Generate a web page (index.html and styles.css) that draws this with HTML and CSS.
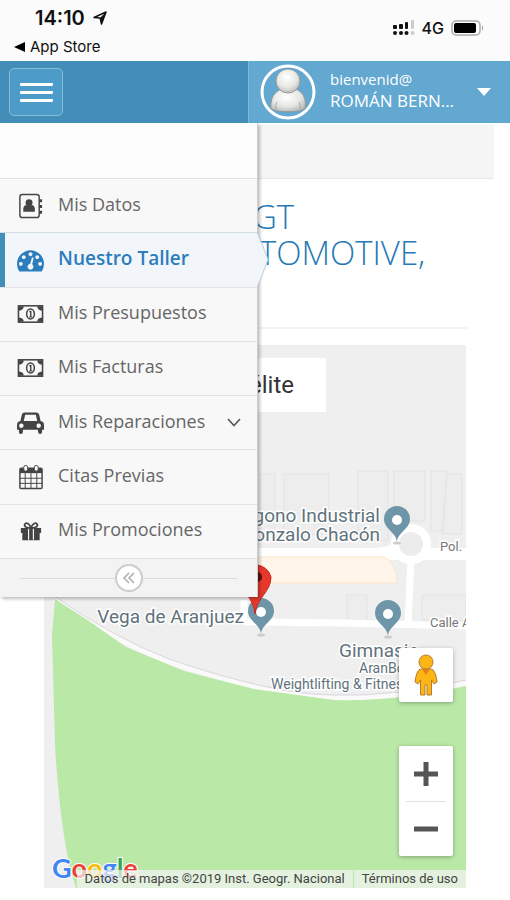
FILE: index.html
```html
<!DOCTYPE html>
<html lang="es">
<head>
<meta charset="utf-8">
<meta name="viewport" content="width=device-width, initial-scale=1">
<title>Nuestro Taller</title>
<link rel="stylesheet" href="styles.css">
</head>
<body>
<div class="status">
  <div class="status-left">
    <div class="clock">14:10
      <svg width="14" height="14" viewBox="0 0 14 14"><path d="M1 6.500 13 1 8.500 13 7.200 7Z" fill="none" stroke="#111" stroke-width="1.500" stroke-linejoin="round"/><path d="M7 7 13 1 8.500 13Z" fill="#111"/></svg>
    </div>
    <a class="back" href="#"><svg width="11" height="10" viewBox="0 0 11 10"><path d="M0 5 11 0V10Z"/></svg>App Store</a>
  </div>
  <div class="status-right">
    <svg width="22" height="16" viewBox="0 0 22 16">
      <g fill="#111"><rect x="0" y="5" width="4" height="4" rx="1"/><rect x="6" y="4" width="4" height="5" rx="1"/><rect x="12" y="2" width="3" height="7" rx="1"/>
      <circle cx="2" cy="13" r="2"/><circle cx="8" cy="13" r="2"/><circle cx="13.500" cy="13" r="2"/></g>
      <g fill="#ccc"><rect x="18" y="0" width="3" height="9" rx="1"/><circle cx="19.500" cy="13" r="2"/></g>
    </svg>
    <span>4G</span>
    <svg width="33" height="16" viewBox="0 0 33 16"><rect x="1" y="1" width="28" height="14" rx="4" fill="#fff" stroke="#aaa" stroke-width="1.500"/><rect x="3" y="3" width="22" height="10" rx="2"/><path d="M31 5q2 3 0 6Z" fill="#999"/></svg>
  </div>
</div>

<header class="navbar">
  <button class="toggle" type="button" aria-label="Menú"><i></i><i></i><i></i></button>
  <button class="user" type="button">
    <svg class="avatar" width="56" height="56" viewBox="0 0 56 56">
      <defs><radialGradient id="skin" cx=".45" cy=".35" r=".7"><stop offset="0" stop-color="#fff"/><stop offset=".6" stop-color="#e6e6e4"/><stop offset="1" stop-color="#b5b5b3"/></radialGradient></defs>
      <circle cx="28" cy="28" r="26" fill="none" stroke="#fff" stroke-width="3"/>
      <path d="M11 44C10 34 15 27 22 25H35C42 27 47 34 45 44C43 49 13 49 11 44Z" fill="url(#skin)" stroke="#96999a"/>
      <path d="M16 47q-1-6 1-9M40 47q1-6-1-9" fill="none" stroke="#aaa"/>
      <circle cx="28" cy="17" r="12" fill="url(#skin)" stroke="#96999a"/>
    </svg>
    <span class="user-name"><small>bienvenid@</small><span>ROMÁN BERN...</span></span>
    <svg width="14" height="8" viewBox="0 0 14 8"><path d="M0 0H14L7 8Z" fill="#fff"/></svg>
  </button>
</header>

<div class="page">
  <nav class="sidebar">
    <div class="shortcuts"></div>
    <ul>
      <li><a href="#">
        <svg class="icon" viewBox="0 0 28 28"><rect x="3" y="2" width="20" height="24" rx="2.500" fill="none" stroke="currentColor" stroke-width="1.500"/><circle cx="12.500" cy="10.500" r="3.600"/><path d="M6.500 20V16q1-3 3-3 3 2 6 0 2 0 3 3v4Z"/><path d="M23 7h3v3h-3zM23 13h3v3h-3zM23 19h3v3h-3z"/></svg>
        Mis Datos</a></li>
      <li class="active"><a href="#">
        <svg class="icon" viewBox="0 0 1792 1792"><path d="M384 1152q0-53-37.500-90.500t-90.500-37.500-90.500 37.500-37.500 90.500 37.500 90.500 90.500 37.500 90.500-37.500 37.500-90.500zm192-448q0-53-37.500-90.500t-90.500-37.500-90.500 37.500-37.500 90.500 37.500 90.500 90.500 37.500 90.500-37.500 37.500-90.500zm428 481l101-382q6-26-7.500-48.500t-38.500-29.500-48 6.500-30 39.500l-101 382q-60 5-107 43.500t-63 98.500q-20 77 20 146t117 89 146-20 89-117q16-60-6-117t-72-91zm660-33q0-53-37.500-90.500t-90.500-37.500-90.500 37.500-37.500 90.500 37.500 90.500 90.500 37.500 90.500-37.500 37.500-90.500zm-640-640q0-53-37.500-90.500t-90.500-37.500-90.500 37.500-37.500 90.500 37.500 90.500 90.500 37.500 90.500-37.500 37.500-90.500zm448 192q0-53-37.500-90.500t-90.500-37.500-90.500 37.500-37.500 90.500 37.500 90.500 90.500 37.500 90.500-37.500 37.500-90.500zm320 448q0 261-141 483-19 29-54 29h-1402q-35 0-54-29-141-221-141-483 0-182 71-348t191-286 286-191 348-71 348 71 286 191 191 286 71 348z"/></svg>
        Nuestro Taller</a>
        <svg class="arrow" viewBox="0 0 12 54" preserveAspectRatio="none"><path d="M0 0 11 27 0 54Z" fill="#f2f6fb"/><path d="M1 0 11 27 1 54" fill="none" stroke="#bccbd6"/></svg></li>
      <li><a href="#">
        <svg class="icon" viewBox="0 0 28 28"><use href="#bill"/></svg>
        Mis Presupuestos</a></li>
      <li><a href="#">
        <svg class="icon" viewBox="0 0 28 28"><g id="bill"><rect x="1.500" y="5.500" width="25" height="17" fill="none" stroke="currentColor" stroke-width="1.600"/><path d="M2 6H7Q7 10 2 10.500ZM26 6H21Q21 10 26 10.500ZM2 22H7Q7 18 2 17.500ZM26 22H21Q21 18 26 17.500Z"/><ellipse cx="14" cy="14" rx="4" ry="5.200" fill="none" stroke="currentColor" stroke-width="1.600"/><path d="M12.500 11.500 14 10.500H15V16.500H16V17.500H12.500V16.500H13.500V12.200H12.500Z"/></g></svg>
        Mis Facturas</a></li>
      <li><a href="#">
        <svg class="icon" viewBox="0 0 28 28"><path fill-rule="evenodd" d="M8 3H20Q22.500 3 23 5.500L24.500 12Q28 12.500 28 16V21H26V23Q26 25.500 24 25.500T21.800 23V21H6.200V23Q6.200 25.500 4 25.500T2 23V21H0V16Q0 12.500 3.500 12L5 5.500Q5.500 3 8 3ZM8.500 5.500 7 12H21L19.500 5.500ZM5 14.500A2.300 2.300 0 1 0 5 19 2.300 2.300 0 0 0 5 14.500ZM23 14.500A2.300 2.300 0 1 0 23 19 2.300 2.300 0 0 0 23 14.500Z"/></svg>
        Mis Reparaciones
        <svg class="chevron" width="14" height="9" viewBox="0 0 14 9"><path d="M1 1 7 7.500 13 1" fill="none" stroke="#555" stroke-width="1.600"/></svg></a></li>
      <li><a href="#">
        <svg class="icon" viewBox="0 0 28 28"><rect x="3" y="5" width="23" height="21" rx="1.500" fill="none" stroke="currentColor" stroke-width="1.500"/><path d="M3 5H26V10H3Z"/><path d="M8.500 10V26M14.500 10V26M20.500 10V26M3 15.300H26M3 20.600H26" stroke="currentColor"/><rect x="7" y="2" width="4" height="6" rx="2" fill="#f8f8f8" stroke="currentColor"/><rect x="18" y="2" width="4" height="6" rx="2" fill="#f8f8f8" stroke="currentColor"/></svg>
        Citas Previas</a></li>
      <li><a href="#">
        <svg class="icon" viewBox="0 0 28 28"><path d="M4 11H25V16H23.500V23.500H5.500V16H4Z"/><path d="M12 11V23M17 11V23" stroke="#f8f8f8" stroke-width="1.200"/><path d="M14.500 11C11 11 7 10 8 7 9.500 4.500 13 6 14.500 11 16 6 19.500 4.500 21 7 22 10 18 11 14.500 11Z" fill="none" stroke="currentColor" stroke-width="1.800"/></svg>
        Mis Promociones</a></li>
    </ul>
    <div class="collapse">
      <button type="button" aria-label="Contraer"><svg width="12" height="12" viewBox="0 0 12 12"><path d="M6 1 1 6 6 11M11 1 6 6 11 11" fill="none" stroke="#aaa" stroke-width="1.500"/></svg></button>
    </div>
  </nav>

  <main>
    <div class="breadcrumbs"></div>
    <h1><span>GT</span><span class="indent">TOMOTIVE,</span></h1>
    <section class="map" aria-label="Mapa">
      <svg class="tiles" viewBox="0 0 422 543" preserveAspectRatio="xMinYMin slice">
        <defs><g id="pin"><ellipse cy="1" rx="4" ry="1.500" fill="#ccc"/><path d="M0 0C-1-10-13-13-13-23A13 13 0 0 1 13-23C13-13 1-10 0 0Z" fill="#6f96a8"/><circle cy="-22" r="5" fill="#fff"/></g></defs>
        <rect width="422" height="543" fill="#efefef"/>
        <g fill="#ededed" stroke="#e3e3e3"><path d="M216 129h15v60h-15zM240 129h45v60h-45zM314 126h30v70h-30zM350 126h31v50h-31zM387 126h16l-4 60h-12zM403 129h15v60h-20z"/><path d="M303 250h20v26h-20zM378 250h44v25h-44z"/></g>
        <path d="M200 209H422M200 209H330Q345 209 355 202" fill="none" stroke="#fff" stroke-width="12"/>
        <path d="M367 212 364 282M200 277 300 278 422 281M200 255V278" fill="none" stroke="#fff" stroke-width="7"/>
        <circle cx="367" cy="199" r="16" fill="#ececec" stroke="#fff" stroke-width="8"/>
        <path d="M200 212H340Q353 218 353 238H200Z" fill="#fff5e9" stroke="#fde3c8"/>
        <path d="M10 254 Q70 296 125 317 Q230 353 290 353 Q350 355 422 338" fill="none" stroke="#fafafa" stroke-width="5"/>
        <path d="M10 251 Q70 293 125 314 Q230 350 290 350 Q350 352 422 335" fill="none" stroke="#dcd8de"/>
        <path d="M11 254 45 276 82 302 140 326 210 344 290 355Q350 357 422 341V543H32Q17 500 11 400L8 290Z" fill="#b9e8a7"/>
        <g class="place" font-size="19">
          <text x="336" y="177" text-anchor="end">gono Industrial</text>
          <text x="336" y="196" text-anchor="end">onzalo Chacón</text>
          <text x="200" y="278" text-anchor="end">Vega de Aranjuez</text>
          <text x="295" y="312">Gimnasio</text>
        </g>
        <g class="place" font-size="14"><text x="315" y="328">AranBox</text><text x="227" y="344">Weightlifting &amp; Fitness</text></g>
        <g class="place road" font-size="13"><text x="396" y="206">Pol.</text><text x="386" y="282">Calle A</text></g>
        <use href="#pin" x="353" y="197"/><use href="#pin" x="217" y="289"/><use href="#pin" x="344" y="291"/>
        <path d="M211 269C210 252 196 247 196 232A16 16 0 0 1 227 232C227 247 213 252 211 269Z" fill="#e8382c" stroke="#c8281e"/><circle cx="213" cy="232" r="5" fill="#5c130e"/>
        <text class="google" x="8" y="533"><tspan fill="#4285f4">G</tspan><tspan fill="#ea4335">o</tspan><tspan fill="#fbbc05">o</tspan><tspan fill="#4285f4">g</tspan><tspan fill="#34a853">l</tspan><tspan fill="#ea4335">e</tspan></text>
      </svg>
      <button class="map-type" type="button">Satélite</button>
      <div class="controls">
        <button class="pegman" type="button" aria-label="Street View"><svg width="24" height="42" viewBox="0 0 24 42"><g fill="#fbb615" stroke="#b87b2b"><path d="M6 15H18Q22 18 23 28L20 30 17.500 26V41H13V31H11V41H6.500V26L4 30 1 28Q2 18 6 15Z"/><circle cx="12" cy="8" r="7"/></g><path d="M8 15H16L12 21Z" fill="#e1811b"/></svg></button>
        <div class="zoom">
          <button type="button" aria-label="Acercar"><svg width="26" height="26" viewBox="0 0 26 26"><path d="M13 1V25M1 13H25" stroke="#555" stroke-width="5"/></svg></button>
          <button type="button" aria-label="Alejar"><svg width="26" height="26" viewBox="0 0 26 26"><path d="M1 13H25" stroke="#555" stroke-width="5"/></svg></button>
        </div>
      </div>
      <div class="credits"><span>Datos de mapas ©2019 Inst. Geogr. Nacional</span><a href="#">Términos de uso</a></div>
    </section>
  </main>
</div>
</body>
</html>
```
FILE: styles.css
```css
* { box-sizing: border-box; }
body { margin: 0; background: #fff; font-family: "Open Sans", sans-serif; color: #666; }
button { margin: 0; padding: 0; border: 0; font: inherit; cursor: pointer; }
a { color: inherit; text-decoration: none; }
svg { display: block; flex: none; }

.status { display: flex; justify-content: space-between; height: 61px; padding: 6px 26px 0 14px; background: #fbfbfb; color: #111; font-family: Inter, sans-serif; }
.clock { display: flex; align-items: center; gap: 8px; padding-left: 21px; font-size: 20px; font-weight: 600; line-height: 24px; }
.back { display: flex; align-items: center; gap: 5px; margin-top: 7px; font-size: 15px; line-height: 20px; }
.status-right { display: flex; align-items: center; gap: 7px; height: 44px; font-size: 16px; font-weight: 500; }

.navbar { display: flex; justify-content: space-between; align-items: center; height: 62px; padding-left: 9px; background: #438eb9; }
.toggle { display: flex; flex-direction: column; align-items: center; justify-content: center; gap: 5px; width: 54px; height: 48px; border: 1px solid #86bddd; border-radius: 5px; background: #4c9bc9; }
.toggle i { width: 33px; height: 3px; border-radius: 1px; background: #fff; }
.user { display: flex; align-items: center; gap: 14px; width: 262px; height: 62px; padding: 0 19px 0 11px; border-left: 1px solid #7fb8da; background: #62a8d1; color: #fff; text-align: left; }
.user-name { flex: 1; display: flex; flex-direction: column; padding-bottom: 4px; font-size: 17px; line-height: 21px; white-space: nowrap; }
.user-name small { font-size: 15px; }

.page { position: relative; }
.sidebar { position: absolute; top: 0; left: 0; z-index: 2; width: 258px; background: #f8f8f8; border-right: 1px solid #ccc; box-shadow: 2px 2px 3px rgba(0, 0, 0, .25); }
.shortcuts { height: 55px; background: #fcfcfc; }
.sidebar ul { display: grid; grid-auto-rows: 1fr; height: 380px; margin: 0; padding: 0; list-style: none; }
.sidebar li { position: relative; display: flex; border-top: 1px solid #e3e3e3; }
.sidebar li a { flex: 1; display: flex; align-items: center; gap: 14px; padding: 0 16px 4px 17px; font-size: 18px; }
.icon { width: 27px; height: 28px; margin-top: 4px; fill: currentColor; color: #444; }
.chevron { margin-left: auto; margin-top: 4px; }
.sidebar .active { background: #f2f6fb; color: #2b7dbc; border-color: #cfdce5; }
.sidebar .active a { border-left: 5px solid #438eb9; padding-left: 12px; font-size: 19px; font-weight: 600; }
.active .icon { color: #2b7dbc; }
.arrow { position: absolute; left: 100%; top: 0; width: 12px; height: 100%; }
.collapse { display: flex; align-items: center; height: 39px; padding: 0 20px; border-top: 1px solid #e0e0e0; background: #f3f3f3; }
.collapse::before, .collapse::after { content: ""; flex: 1; height: 1px; background: #ddd; }
.collapse button { display: grid; place-items: center; width: 28px; height: 28px; border: 2px solid #ccc; border-radius: 50%; background: #fff; }

main { padding-top: 2px; }
.breadcrumbs { height: 54px; margin-right: 16px; border-bottom: 1px solid #e8e8e8; background: #f5f5f5; }
h1 { display: grid; margin: 20px 43px 16px; padding: 0 0 56px 210px; border-bottom: 2px solid #f3f3f3; color: #2679b5; font-size: 33px; font-weight: 300; line-height: 36px; }
.indent { padding-left: 6px; }
.map { position: relative; margin: 0 44px; overflow: hidden; font-family: Roboto, sans-serif; }
.tiles { width: 100%; height: 543px; }
.place { fill: #61727c; stroke: #fff; stroke-width: 3px; paint-order: stroke; }
.road { fill: #777; }
.google { font-family: Lato, sans-serif; font-size: 27px; font-weight: 700; stroke: #fff; stroke-width: 2px; paint-order: stroke; }
.map-type { position: absolute; top: 13px; left: 140px; width: 142px; height: 54px; padding-right: 32px; background: #fff; color: #333; font-size: 24px; text-align: right; }
.controls { position: absolute; right: 13px; bottom: 32px; display: grid; gap: 44px; width: 54px; }
.pegman, .zoom { border-radius: 2px; background: #fff; box-shadow: 0 1px 4px rgba(0, 0, 0, .3); }
.pegman { display: grid; place-items: center; height: 54px; }
.zoom { display: grid; padding: 0 7px; }
.zoom button { display: grid; place-items: center; height: 55px; background: none; }
.zoom button + button { border-top: 1px solid #e3e3e3; }
.credits { position: absolute; right: 0; bottom: 0; display: flex; gap: 1px; font-size: 13px; line-height: 18px; color: #444; white-space: nowrap; }
.credits span, .credits a { padding: 0 8px; background: rgba(245, 245, 245, .7); }
```
